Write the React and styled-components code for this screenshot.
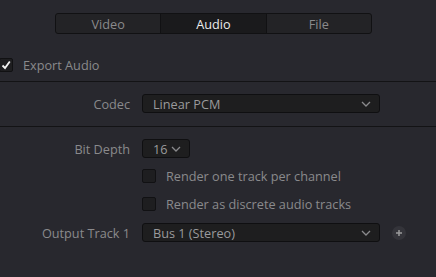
import React from "react";
import styled, { createGlobalStyle } from "styled-components";

const GlobalStyle = createGlobalStyle`
  html, body {
    margin: 0;
    padding: 0;
    background: #28282e;
  }
  body {
    font-family: "Open Sans", "Noto Sans", sans-serif;
    font-size: 12.7px;
  }
`;

const Page = styled.div`
  width: 436px;
  height: 277px;
  background: #28282e;
  overflow: hidden;
  display: flex;
  flex-direction: column;
`;

const TabBar = styled.div`
  display: flex;
  margin: 13px 0 0 55px;
  width: 317px;
  height: 21px;
  box-sizing: border-box;
  border: 1px solid #111113;
  border-radius: 3px;
  overflow: hidden;
  background: #232326;
`;

const Tab = styled.div`
  flex: 1;
  display: flex;
  align-items: center;
  justify-content: center;
  font-size: 12.7px;
  color: ${(p) => (p.active ? "#ececec" : "#8a8a8c")};
  background: ${(p) => (p.active ? "#1a1a1c" : "transparent")};
  border-left: ${(p) => (p.first ? "none" : "1px solid #111113")};
`;

const ExportRow = styled.label`
  display: flex;
  align-items: center;
  gap: 10px;
  margin: 24px 0 0 -1px;
  height: 14px;
  line-height: 14px;
  color: #8a8a8c;
  font-size: 12.7px;
`;

const Box = styled.span`
  width: 14px;
  height: 14px;
  flex: none;
  box-sizing: border-box;
  border: 1px solid #111113;
  border-radius: 2px;
  background: #1e1e20;
  display: flex;
  align-items: center;
  justify-content: center;
`;

const Divider = styled.div`
  height: 1px;
  background: #131315;
  margin-top: ${(p) => p.top}px;
`;

const Row = styled.div`
  display: grid;
  grid-template-columns: 130px auto auto;
  column-gap: 12px;
  align-items: center;
  justify-content: start;
  height: 19px;
  margin-top: ${(p) => p.top}px;
`;

const Label = styled.div`
  text-align: right;
  color: #8a8a8c;
  font-size: 12.7px;
`;

const Select = styled.div`
  width: ${(p) => p.width}px;
  height: 19px;
  box-sizing: border-box;
  border: 1px solid #0f0f11;
  border-radius: 3px;
  background: #1e1e1f;
  display: flex;
  align-items: center;
  justify-content: space-between;
  padding: 0 8px 0 10px;
  color: #9a9a9c;
  font-size: 12.7px;
`;

const CheckRow = styled.div`
  display: flex;
  align-items: center;
  gap: 10px;
  height: 14px;
  line-height: 14px;
  margin: ${(p) => p.top}px 0 0 142px;
  color: #8a8a8c;
  font-size: 12.7px;
`;

const PlusButton = styled.div`
  width: 14px;
  height: 14px;
  border-radius: 50%;
  background: #34343a;
  display: flex;
  align-items: center;
  justify-content: center;
`;

const Chevron = () => (
  <svg width="10" height="6" viewBox="0 0 10 6">
    <path d="M1 1 L5 5 L9 1" fill="none" stroke="#8a8a8c" strokeWidth="1.3" />
  </svg>
);

const Check = () => (
  <svg width="10" height="10" viewBox="0 0 10 10">
    <path d="M1.5 5.5 L4 8 L8.8 1.5" fill="none" stroke="#f2f2f2" strokeWidth="1.8" />
  </svg>
);

const Plus = () => (
  <svg width="8" height="8" viewBox="0 0 8 8">
    <path d="M4 1 V7 M1 4 H7" stroke="#9a9a9c" strokeWidth="1.5" />
  </svg>
);

export default function App() {
  return (
    <Page>
      <GlobalStyle />
      <TabBar>
        <Tab first>Video</Tab>
        <Tab active>Audio</Tab>
        <Tab>File</Tab>
      </TabBar>

      <ExportRow>
        <Box>
          <Check />
        </Box>
        Export Audio
      </ExportRow>

      <Divider top={9} />

      <Row top={12}>
        <Label>Codec</Label>
        <Select width={238}>
          Linear PCM
          <Chevron />
        </Select>
      </Row>

      <Divider top={13} />

      <Row top={12}>
        <Label>Bit Depth</Label>
        <Select width={48}>
          16
          <Chevron />
        </Select>
      </Row>

      <CheckRow top={11}>
        <Box />
        Render one track per channel
      </CheckRow>

      <CheckRow top={14}>
        <Box />
        Render as discrete audio tracks
      </CheckRow>

      <Row top={12}>
        <Label>Output Track 1</Label>
        <Select width={238}>
          Bus 1 (Stereo)
          <Chevron />
        </Select>
        <PlusButton>
          <Plus />
        </PlusButton>
      </Row>
    </Page>
  );
}
